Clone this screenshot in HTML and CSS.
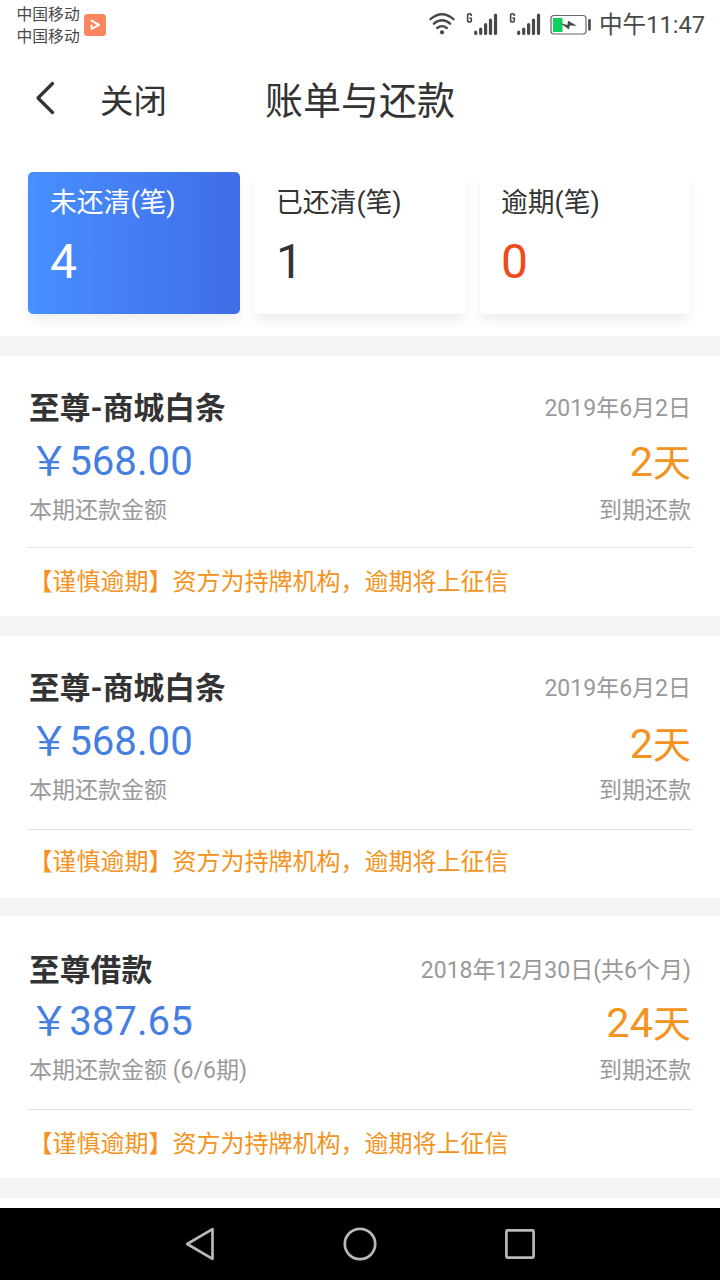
FILE: index.html
```html
<!DOCTYPE html>
<html lang="zh-CN">
<head>
<meta charset="utf-8">
<title>账单与还款</title>
<link rel="stylesheet" href="styles.css">
</head>
<body>
<div class="screen">
  <header class="status">
    <div class="carriers"><span>中国移动</span><span>中国移动</span></div>
    <svg class="app-badge" width="22" height="22" viewBox="0 0 22 22"><rect width="22" height="22" rx="3.5" fill="#fb855f"/><path d="M7.6 6.6 15 10.9 7.6 15V11.6" fill="none" stroke="#fff" stroke-width="2" stroke-linejoin="round" stroke-linecap="round"/></svg>
    <div class="indicators">
      <svg width="170" height="40" viewBox="425 5 170 40">
        <g fill="none" stroke="#484848" stroke-width="2.3" stroke-linecap="round">
          <path d="M430.5 19.2Q442 9.4 453.5 19.2M433.8 23.7Q442 16.8 450.2 23.7M437.2 28Q442 24.2 446.8 28"/>
        </g>
        <circle cx="442" cy="32.3" r="2.1" fill="#484848"/>
        <g class="bars" fill="none" stroke="#484848" stroke-width="3.2" stroke-linecap="round">
          <path d="M475.7 32.2V33.4M480.7 29V33.4M485.6 24.5V33.4M490.5 20V33.4M495.5 15V33.4"/>
          <path d="M518.7 32.2V33.4M523.7 29V33.4M528.6 24.5V33.4M533.5 20V33.4M538.5 15V33.4"/>
        </g>
        <g fill="none" stroke="#484848" stroke-width="1.6">
          <path d="M471.3 16V15.2Q471.3 13.8 469.4 13.8Q467.6 13.8 467.6 15.4V20.2Q467.6 22 469.4 22Q471.3 22 471.3 20.2V18.3H469.4"/>
          <path d="M514.3 16V15.2Q514.3 13.8 512.4 13.8Q510.6 13.8 510.6 15.4V20.2Q510.6 22 512.4 22Q514.3 22 514.3 20.2V18.3H512.4"/>
        </g>
        <rect x="551" y="15.5" width="35" height="18.5" rx="3" fill="#fff" stroke="#666" stroke-width="1.2"/>
        <rect x="553" y="18" width="9.5" height="14" fill="#0bd25e"/>
        <path d="M560.5 23.2 567.5 25 568 20.8 577 25.8 569.8 25.6 569 29.4Z" fill="#484848"/>
        <path d="M589.5 20.2V29.5" stroke="#484848" stroke-width="2.6" stroke-linecap="round"/>
      </svg>
      <span class="clock">中午11:47</span>
    </div>
  </header>

  <nav class="navbar">
    <svg class="back" width="20" height="34" viewBox="0 0 20 34"><path d="M17.5 2.5 3 17 17.5 31.5" fill="none" stroke="#333" stroke-width="3.2" stroke-linecap="round" stroke-linejoin="round"/></svg>
    <span class="close">关闭</span>
    <h1 class="title">账单与还款</h1>
  </nav>

  <section class="tabs">
    <div class="tab active"><div class="tab-label">未还清(笔)</div><div class="tab-count">4</div></div>
    <div class="tab"><div class="tab-label">已还清(笔)</div><div class="tab-count">1</div></div>
    <div class="tab overdue"><div class="tab-label">逾期(笔)</div><div class="tab-count">0</div></div>
  </section>

  <main class="bills">
    <article class="bill first">
      <div class="row head"><h2 class="name">至尊-商城白条</h2><span class="date">2019年6月2日</span></div>
      <div class="row money"><span class="amount">￥568.00</span><span class="days">2<span class="unit">天</span></span></div>
      <div class="row note"><span>本期还款金额</span><span>到期还款</span></div>
      <p class="warning">【谨慎逾期】资方为持牌机构，逾期将上征信</p>
    </article>
    <article class="bill second">
      <div class="row head"><h2 class="name">至尊-商城白条</h2><span class="date">2019年6月2日</span></div>
      <div class="row money"><span class="amount">￥568.00</span><span class="days">2<span class="unit">天</span></span></div>
      <div class="row note"><span>本期还款金额</span><span>到期还款</span></div>
      <p class="warning">【谨慎逾期】资方为持牌机构，逾期将上征信</p>
    </article>
    <article class="bill third">
      <div class="row head"><h2 class="name">至尊借款</h2><span class="date">2018年12月30日(共6个月)</span></div>
      <div class="row money"><span class="amount">￥387.65</span><span class="days">24<span class="unit">天</span></span></div>
      <div class="row note"><span>本期还款金额 (6/6期)</span><span>到期还款</span></div>
      <p class="warning">【谨慎逾期】资方为持牌机构，逾期将上征信</p>
    </article>
    <article class="bill next"></article>
  </main>

  <footer class="softkeys">
    <svg width="32" height="36" viewBox="0 0 32 36"><path d="M28.5 3.2V32.8L3.2 18Z" fill="none" stroke="#b8b8b8" stroke-width="2.7" stroke-linejoin="round"/></svg>
    <svg width="36" height="36" viewBox="0 0 36 36"><circle cx="18" cy="18" r="15.2" fill="none" stroke="#b8b8b8" stroke-width="2.7"/></svg>
    <svg width="32" height="36" viewBox="0 0 32 36"><rect x="2.4" y="4.4" width="27.2" height="27.2" rx="1" fill="none" stroke="#b8b8b8" stroke-width="2.7"/></svg>
  </footer>
</div>
</body>
</html>
```
FILE: styles.css
```css
* { box-sizing: border-box; }
body {
  margin: 0;
  background: #fff;
  color: #333;
  font-family: Roboto, "Noto Sans CJK SC", sans-serif;
}
h1, h2, p { margin: 0; font-weight: 400; }
svg { display: block; flex: none; }

.screen {
  width: 720px;
  height: 1280px;
  display: flex;
  flex-direction: column;
  overflow: hidden;
  white-space: nowrap;
}

.status { height: 50px; display: flex; padding-left: 16px; color: #484848; }
.carriers {
  display: flex;
  flex-direction: column;
  width: 68px;
  padding: 4px 0 0 0.5px;
  font-size: 15.8px;
  line-height: 22px;
}
.app-badge { margin-top: 14px; }
.indicators { display: flex; margin-left: auto; padding: 5px 15px 0 0; }
.clock { width: 110px; padding-left: 4px; font-size: 23.6px; line-height: 41px; }

.navbar {
  height: 100px;
  display: grid;
  grid-template-columns: 65px 165px 1fr;
  padding-left: 35px;
  line-height: 103px;
}
.back { margin-top: 31px; }
.close { font-size: 33.4px; }
.title { font-size: 38px; }

.tabs {
  height: 186px;
  display: grid;
  grid-template-columns: 212px 212px 210px;
  gap: 14px;
  padding: 22px 28px;
}
.tab {
  padding: 11px 22px;
  border-radius: 5px;
  background: #fff;
  box-shadow: 0 8px 12px rgba(0, 0, 0, .06);
}
.tab.active { background: linear-gradient(90deg, #488fff, #3f6de6); color: #fff; }
.tab.overdue { padding-left: 21px; }
.tab-label { font-size: 26.8px; line-height: 40px; }
.tab-count { font-size: 48px; line-height: 78px; }
.overdue .tab-count { color: #f14a1c; }

.bills { flex: 1; display: flex; flex-direction: column; background: #f4f4f4; }
.bill { padding: 0 29px; background: #fff; }
.bill.first { height: 260px; margin-top: 20px; padding-top: 28px; }
.bill.second { height: 262px; margin-top: 20px; padding-top: 28px; }
.bill.third { height: 262px; margin-top: 18px; padding-top: 30px; }
.bill.next { height: 10px; margin-top: 20px; }
.row { display: flex; justify-content: space-between; }
.head { height: 50px; line-height: 50px; }
.name { font-size: 30.8px; font-weight: 700; }
.date { color: #999; font-size: 23px; }
.money { height: 56px; line-height: 56px; }
.amount { color: #467fe2; font-size: 40.2px; }
.days { color: #f39320; font-size: 41.5px; }
.unit { font-size: 38px; }
.note { height: 42px; color: #999; font-size: 23px; line-height: 42px; }
.second .days { line-height: 59px; }
.third .money { height: 54px; line-height: 54px; }
.third .amount { line-height: 51px; }
.warning {
  margin: 15px -1px 0;
  padding-left: 0.5px;
  border-top: 1px solid #e2e2e2;
  color: #f39320;
  font-size: 24px;
  line-height: 68px;
}
.second .warning { margin-top: 17px; line-height: 65px; }
.third .warning { margin-top: 17px; }

.softkeys {
  height: 72px;
  display: flex;
  justify-content: center;
  align-items: center;
  gap: 126px;
  background: #000;
}
```
